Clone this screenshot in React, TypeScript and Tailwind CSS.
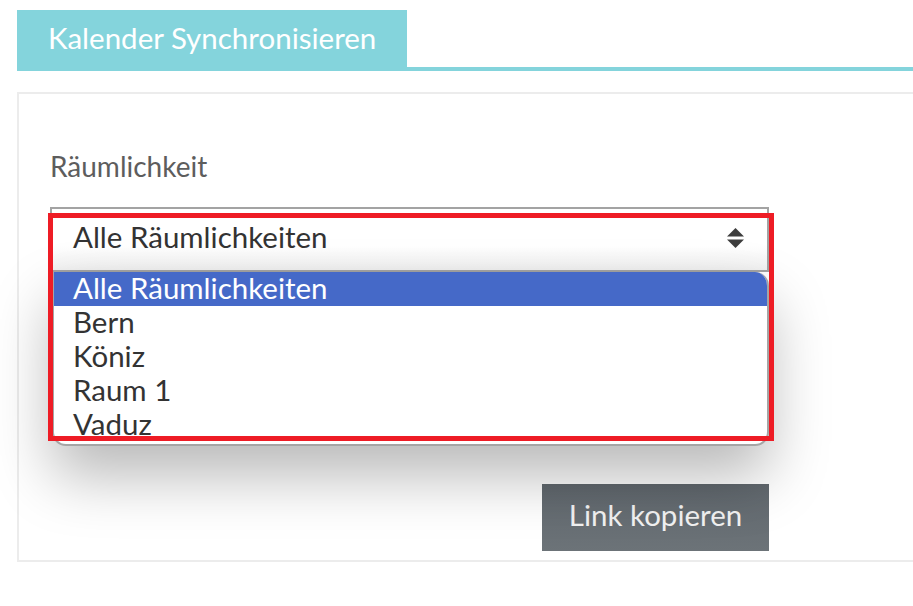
import React from 'react'

const rooms = ['Alle Räumlichkeiten', 'Bern', 'Köniz', 'Raum 1', 'Vaduz']

function Caret() {
    return (
        <svg width="17" height="20" viewBox="0 0 17 20" className="text-[#3d3d3d]">
            <path d="M8.5 0 L17 8.5 H0 Z" fill="currentColor" />
            <path d="M0 11.5 H17 L8.5 20 Z" fill="currentColor" />
        </svg>
    )
}

export default function App() {
    return (
        <div className="relative w-[913px] h-[606px] bg-white overflow-hidden font-['Lato','Liberation_Sans',sans-serif]">
            {/* Tab header */}
            <div className="flex items-end pt-[10px] pl-[17px]">
                <div className="w-[390px] h-[61px] bg-[#84d4dc] text-white text-[29.5px] pl-[31px] flex items-center pb-[4px]">
                    Kalender Synchronisieren
                </div>
                <div className="flex-1 h-[4px] bg-[#84d4dc]"></div>
            </div>

            {/* Panel */}
            <div className="relative mt-[21px] ml-[17px] h-[470px] border-2 border-r-0 border-[#ececec] pl-[31px] pt-[57px]">
                <div className="text-[28px] text-[#5d5d5d] leading-[30px]">Räumlichkeit</div>

                <div className="mt-[26px] w-[719px]">
                    <div className="h-[65px] border-2 border-[#a3a3a3] bg-gradient-to-b from-white from-60% to-[#f1f1f1] flex items-center justify-between pl-[21px] pr-[23px] pb-[4px]">
                        <span className="text-[29.5px] text-[#333]">Alle Räumlichkeiten</span>
                        <Caret />
                    </div>

                    <div className="mt-[212px] flex justify-end">
                        <button className="w-[227px] h-[67px] bg-gradient-to-b from-[#61686e] to-[#6c7378] text-[#f2f2f2] text-[29.5px] pb-[4px]">
                            Link kopieren
                        </button>
                    </div>
                </div>

                {/* Dropdown list */}
                <div className="absolute left-[33px] top-[178px] w-[717px] h-[174px] bg-white border-2 border-t-0 border-[#a5a5a5] rounded-tr-[14px] rounded-b-[14px] shadow-[0_30px_60px_rgba(0,0,0,0.28)] overflow-hidden">
                    {rooms.map((room, i) => (
                        <div
                            key={room}
                            className={`h-[34px] pl-[19px] pb-[2px] flex items-center text-[29.5px] leading-[30px] ${i === 0 ? 'bg-[#4569c8] text-white' : 'text-[#333]'}`}
                        >
                            {room}
                        </div>
                    ))}
                </div>
            </div>

            {/* Highlight frame */}
            <div className="absolute left-[48px] top-[213px] w-[726px] h-[228px] border-[5px] border-[#ee1c25]"></div>
        </div>
    )
}
